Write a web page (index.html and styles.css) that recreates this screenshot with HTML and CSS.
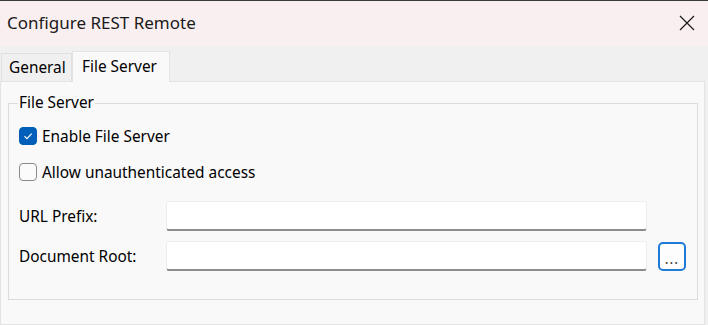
FILE: index.html
```html
<!DOCTYPE html>
<html>
<head>
<meta charset="utf-8">
<link rel="stylesheet" href="styles.css">
</head>
<body>
<div class="window">
  <div class="titlebar">
    <span class="title">Configure REST Remote</span>
    <svg class="close" width="16" height="16" viewBox="0 0 16 16"><path d="M1 1 L15 15 M15 1 L1 15" stroke="#1a1a1a" stroke-width="1.2" fill="none"/></svg>
  </div>
  <div class="tabstrip">
    <div class="tab">General</div>
    <div class="tab active">File Server</div>
  </div>
  <div class="panel">
    <fieldset class="group">
      <legend>File Server</legend>
      <div class="check-row first">
        <span class="box checked"><svg width="12" height="12" viewBox="0 0 12 12"><path d="M2.5 6.3 L5 8.6 L9.6 3.6" stroke="#fff" stroke-width="1.2" fill="none"/></svg></span>
        <span>Enable File Server</span>
      </div>
      <div class="check-row">
        <span class="box"></span>
        <span>Allow unauthenticated access</span>
      </div>
      <div class="form-row first">
        <label>URL Prefix:</label>
        <div class="input"></div>
      </div>
      <div class="form-row">
        <label>Document Root:</label>
        <div class="input"></div>
        <div class="browse">...</div>
      </div>
    </fieldset>
  </div>
</div>
</body>
</html>
```
FILE: styles.css
```css
html, body {
  margin: 0;
  padding: 0;
}
body {
  width: 708px;
  height: 325px;
  overflow: hidden;
  font-family: "Noto Sans", "Open Sans", sans-serif;
  font-size: 15.4px;
  color: #000;
  background: #f0f0f0;
}
.window {
  display: flex;
  flex-direction: column;
  height: 325px;
}
.titlebar {
  height: 45px;
  border-top: 1px solid #3a3a3a;
  background: #f9eff0;
  display: flex;
  align-items: center;
  justify-content: space-between;
  padding: 0 13px 0 7px;
}
.title {
  font-size: 17px;
  color: #1a1a1a;
  margin-top: -2px;
}
.close {
  margin-top: -2px;
}
.tabstrip {
  height: 35px;
  display: flex;
  align-items: flex-end;
  padding-left: 1px;
  background: #f0f0f0;
}
.tab {
  height: 28px;
  box-sizing: border-box;
  padding: 0 7px 0 7px;
  border: 1px solid #e0e0e0;
  border-bottom: none;
  display: flex;
  align-items: center;
  color: #000;
  width: 71px;
  background: #f0f0f0;
}
.tab.active {
  height: 31px;
  width: 98px;
  padding-left: 9px;
  padding-bottom: 2px;
  background: #f9f9f9;
  border-color: #e3e3e3;
  margin-bottom: -1px;
  position: relative;
  z-index: 1;
}
.panel {
  flex: 1;
  background: #f9f9f9;
  border: 1px solid #e3e3e3;
  margin-right: 3px;
  padding: 12px 6px 0 7px;
}
.group {
  margin: 0;
  padding: 0 0 0 10px;
  border: 1px solid #dcdcdc;
  height: 206px;
  box-sizing: border-box;
}
.group legend {
  padding: 0 1px;
  margin-left: -1px;
  line-height: 18px;
}
.check-row {
  display: flex;
  align-items: center;
  gap: 5px;
  height: 20px;
  margin-top: 16px;
}
.check-row.first {
  margin-top: 14px;
}
.box {
  width: 18px;
  height: 18px;
  box-sizing: border-box;
  border: 1px solid #8a8a8a;
  border-radius: 4px;
  background: #fbfbfb;
  display: flex;
  align-items: center;
  justify-content: center;
}
.box.checked {
  background: #005fb8;
  border-color: #005fb8;
}
.form-row {
  display: flex;
  align-items: center;
  height: 30px;
  margin-top: 10px;
}
.form-row.first {
  margin-top: 19px;
}
.form-row label {
  width: 147px;
}
.input {
  width: 481px;
  height: 30px;
  box-sizing: border-box;
  background: #fff;
  border: 1px solid #ececec;
  border-bottom: 2px solid #8c8c8c;
  border-radius: 3px;
}
.browse {
  margin-left: 11px;
  width: 28px;
  height: 29px;
  box-sizing: border-box;
  border: 2px solid #1f7ad6;
  border-radius: 5px;
  background: #fdfdfd;
  display: flex;
  align-items: flex-end;
  justify-content: center;
  font-size: 14px;
  line-height: 20px;
  letter-spacing: 1px;
  color: #333;
  padding-bottom: 0;
}
```
